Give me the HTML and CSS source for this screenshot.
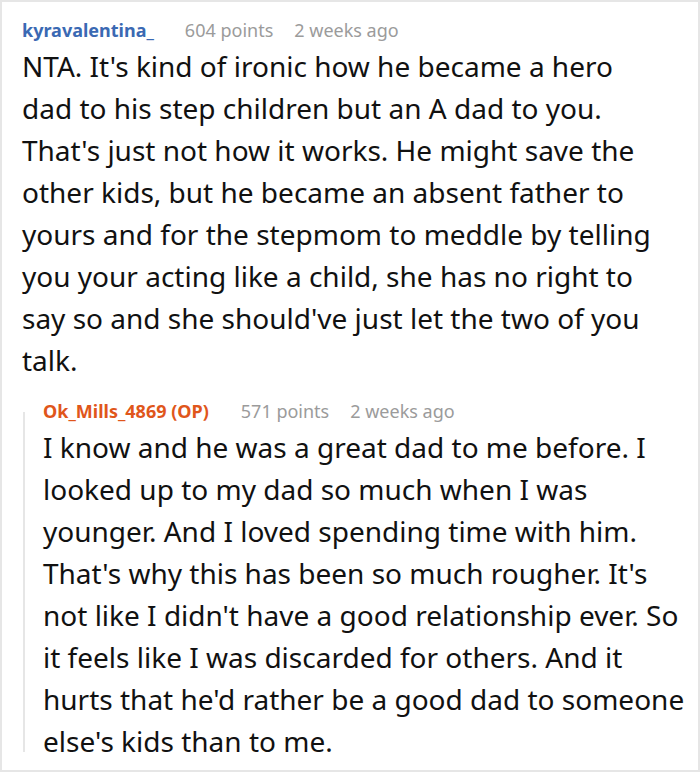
FILE: index.html
```html
<!DOCTYPE html>
<html>
<head>
<meta charset="utf-8">
<link rel="stylesheet" href="styles.css">
</head>
<body>
<div class="frame">
  <div class="comment">
    <div class="meta">
      <span class="user">kyravalentina_</span>
      <span class="points">604 points</span>
      <span class="time">2 weeks ago</span>
    </div>
    <p class="text">NTA. It's kind of ironic how he became a hero<br>dad to his step children but an A dad to you.<br>That's just not how it works. He might save the<br>other kids, but he became an absent father to<br>yours and for the stepmom to meddle by telling<br>you your acting like a child, she has no right to<br>say so and she should've just let the two of you<br>talk.</p>
    <div class="reply">
      <div class="meta">
        <span class="user op">Ok_Mills_4869 (OP)</span>
        <span class="points">571 points</span>
        <span class="time">2 weeks ago</span>
      </div>
      <p class="text">I know and he was a great dad to me before. I<br>looked up to my dad so much when I was<br>younger. And I loved spending time with him.<br>That's why this has been so much rougher. It's<br>not like I didn't have a good relationship ever. So<br>it feels like I was discarded for others. And it<br>hurts that he'd rather be a good dad to someone<br>else's kids than to me.</p>
    </div>
  </div>
</div>
</body>
</html>
```
FILE: styles.css
```css
html, body {
  margin: 0;
  padding: 0;
  background: #fff;
}
body {
  font-family: "Noto Sans", "Open Sans", sans-serif;
  color: #111;
}
.frame {
  box-sizing: border-box;
  width: 700px;
  height: 772px;
  border: 2px solid #e6e6e6;
  overflow: hidden;
}
.comment {
  padding: 16px 0 0 20px;
}
.meta {
  display: flex;
  align-items: baseline;
  font-size: 18px;
  line-height: 24px;
  white-space: nowrap;
}
.user {
  font-weight: 700;
  color: #3a69b3;
  margin-right: 31px;
}
.user.op {
  color: #e0561b;
  margin-right: 32px;
}
.points, .time {
  color: #9b9b9b;
}
.points {
  margin-right: 21px;
}
.text {
  margin: 3px 0 0;
  font-size: 28px;
  line-height: 42px;
  white-space: nowrap;
}
.reply {
  position: relative;
  margin: 18px 0 0 1px;
  padding-left: 20px;
}
.reply::before {
  content: "";
  position: absolute;
  left: 0;
  top: 13px;
  bottom: 10px;
  width: 2px;
  background: #e6e6e6;
}
.reply .text {
  margin-top: 3px;
}
```
